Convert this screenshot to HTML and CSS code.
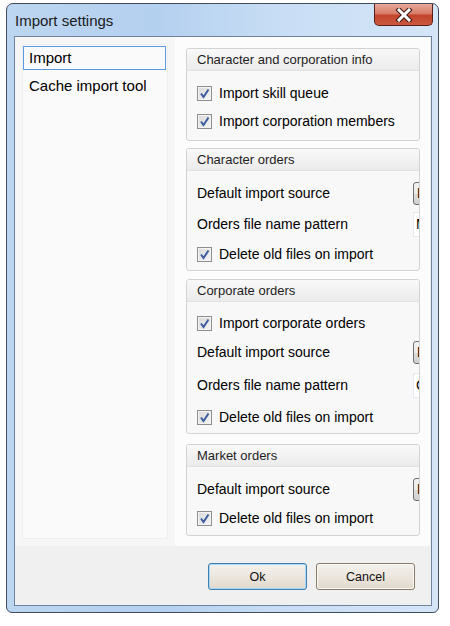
FILE: index.html
```html
<!DOCTYPE html>
<html lang="en">
<head>
    <meta charset="UTF-8">
    <title>Import settings</title>
    <link rel="stylesheet" href="styles.css">
</head>
<body>
    <div class="window">
        <div class="titlebar">
            <span class="title">Import settings</span>
            <button class="close" title="Close">
                <svg width="18" height="14" viewBox="0 0 18 14">
                    <path d="M4 2 L14 12 M14 2 L4 12" stroke="#3b1a14" stroke-width="5" stroke-linecap="square"/>
                    <path d="M4 2 L14 12 M14 2 L4 12" stroke="#ffffff" stroke-width="3" stroke-linecap="square"/>
                </svg>
            </button>
        </div>
        <div class="client">
            <div class="content">
                <div class="sidebar">
                    <ul class="pages">
                        <li class="selected">Import</li>
                        <li>Cache import tool</li>
                    </ul>
                </div>
                <div class="settings">
                    <div class="group">
                        <div class="group-title">Character and corporation info</div>
                        <div class="group-body">
                            <label class="check-row"><span class="check"><svg width="11" height="11" viewBox="0 0 11 11"><path d="M2 5.5 L4.5 9 L9.5 1.5" stroke="#3d5c9e" stroke-width="2" fill="none"/></svg></span>Import skill queue</label>
                            <label class="check-row"><span class="check"><svg width="11" height="11" viewBox="0 0 11 11"><path d="M2 5.5 L4.5 9 L9.5 1.5" stroke="#3d5c9e" stroke-width="2" fill="none"/></svg></span>Import corporation members</label>
                        </div>
                    </div>
                    <div class="group">
                        <div class="group-title">Character orders</div>
                        <div class="group-body">
                            <div class="field-row combo-row">
                                <span class="field-label">Default import source</span>
                                <span class="combo">EVE</span>
                            </div>
                            <div class="field-row text-row">
                                <span class="field-label">Orders file name pattern</span>
                                <span class="text-input">My</span>
                            </div>
                            <label class="check-row"><span class="check"><svg width="11" height="11" viewBox="0 0 11 11"><path d="M2 5.5 L4.5 9 L9.5 1.5" stroke="#3d5c9e" stroke-width="2" fill="none"/></svg></span>Delete old files on import</label>
                        </div>
                    </div>
                    <div class="group">
                        <div class="group-title">Corporate orders</div>
                        <div class="group-body">
                            <label class="check-row"><span class="check"><svg width="11" height="11" viewBox="0 0 11 11"><path d="M2 5.5 L4.5 9 L9.5 1.5" stroke="#3d5c9e" stroke-width="2" fill="none"/></svg></span>Import corporate orders</label>
                            <div class="field-row combo-row">
                                <span class="field-label">Default import source</span>
                                <span class="combo">EVE</span>
                            </div>
                            <div class="field-row text-row">
                                <span class="field-label">Orders file name pattern</span>
                                <span class="text-input">Corp</span>
                            </div>
                            <label class="check-row"><span class="check"><svg width="11" height="11" viewBox="0 0 11 11"><path d="M2 5.5 L4.5 9 L9.5 1.5" stroke="#3d5c9e" stroke-width="2" fill="none"/></svg></span>Delete old files on import</label>
                        </div>
                    </div>
                    <div class="group">
                        <div class="group-title">Market orders</div>
                        <div class="group-body">
                            <div class="field-row combo-row">
                                <span class="field-label">Default import source</span>
                                <span class="combo">File</span>
                            </div>
                            <label class="check-row"><span class="check"><svg width="11" height="11" viewBox="0 0 11 11"><path d="M2 5.5 L4.5 9 L9.5 1.5" stroke="#3d5c9e" stroke-width="2" fill="none"/></svg></span>Delete old files on import</label>
                        </div>
                    </div>
                </div>
            </div>
            <div class="footer">
                <button class="btn btn-default">Ok</button>
                <button class="btn">Cancel</button>
            </div>
        </div>
    </div>
</body>
</html>
```

FILE: styles.css
```css
body {
    margin: 0;
    background-color: #ffffff;
    font-family: "Liberation Sans", Arial, sans-serif;
    color: #000;
}
.window {
    box-sizing: border-box;
    width: 433px;
    height: 610px;
    margin: 3px 0 0 6px;
    padding: 0 6px 6px 7px;
    border: 1px solid #414c5c;
    border-radius: 7px 7px 6px 6px;
    background: linear-gradient(90deg, #bcd6f1 0%, #b4d0ef 35%, #c9def5 65%, #d4e5f7 100%);
    display: flex;
    flex-direction: column;
}
.titlebar {
    height: 32px;
    display: flex;
    justify-content: space-between;
    align-items: flex-start;
    flex-shrink: 0;
}
.title {
    font-size: 15px;
    color: #1b1b1b;
    margin: 8px 0 0 1px;
}
.close {
    width: 59px;
    height: 22px;
    margin: 0 -1px 0 0;
    padding: 0;
    border: 1px solid #5a2018;
    border-top: none;
    border-radius: 0 0 5px 5px;
    background: linear-gradient(#e9a899 0%, #d77d6b 45%, #c4432c 55%, #c85a40 100%);
    display: flex;
    align-items: center;
    justify-content: center;
}
.client {
    flex: 1;
    min-height: 0;
    border: 1px solid #6f849c;
    display: flex;
    flex-direction: column;
    background-color: #f0f0f0;
}
.content {
    height: 509px;
    display: flex;
    flex-shrink: 0;
}
.sidebar {
    width: 160px;
    flex-shrink: 0;
    box-sizing: border-box;
    padding: 7px;
    background-color: #f6f6f6;
}
.pages {
    list-style: none;
    margin: 0;
    padding: 1px 1px 0 0;
    height: 100%;
    box-sizing: border-box;
    background-color: #fafafa;
    border: 1px solid #efefef;
    border-radius: 2px;
    font-size: 15px;
}
.pages li {
    height: 24px;
    line-height: 22px;
    padding-left: 5px;
    margin-bottom: 4px;
    border: 1px solid transparent;
    box-sizing: border-box;
    white-space: nowrap;
}
.pages li.selected {
    border-color: #5b9be0;
}
.settings {
    width: 255px;
    min-width: 0;
    flex-shrink: 0;
    box-sizing: border-box;
    padding: 11px 10px 0 11px;
    background-color: #fcfcfc;
}
.group {
    border: 1px solid #d3d3d3;
    border-radius: 3px;
    background-color: #f8f8f8;
    overflow: hidden;
    margin-bottom: 8px;
}
.group:first-child {
    margin-bottom: 7px;
}
.group:nth-child(3) {
    margin-bottom: 10px;
}
.group-title {
    height: 21px;
    line-height: 21px;
    padding-left: 10px;
    font-size: 13px;
    color: #1e1e1e;
    background: linear-gradient(#f9f9f9, #ebebeb);
    border-bottom: 1px solid #e2e2e2;
}
.group-body {
    padding: 7px 0 3px 10px;
    font-size: 14px;
}
.group:first-child .group-body {
    padding: 8px 0 5px 10px;
}
.group:nth-child(2) .group-body {
    padding-bottom: 2px;
}
.group:nth-child(3) .group-body {
    padding-bottom: 2px;
}
.group:nth-child(3) .text-row {
    height: 36px;
}
.check-row {
    height: 28px;
    display: flex;
    align-items: center;
    white-space: nowrap;
}
.check {
    width: 13px;
    height: 13px;
    border: 1px solid #8f8f8f;
    background: linear-gradient(135deg, #d8d8d8, #f6f6f6);
    box-shadow: inset 0 0 0 1px #f4f4f4;
    margin-right: 7px;
    display: flex;
    align-items: center;
    justify-content: center;
    flex-shrink: 0;
}
.field-row {
    display: flex;
    align-items: center;
    white-space: nowrap;
}
.combo-row {
    height: 30px;
}
.text-row {
    height: 32px;
}
.field-label {
    width: 216px;
    flex-shrink: 0;
}
.combo {
    width: 150px;
    height: 23px;
    line-height: 21px;
    box-sizing: border-box;
    padding-left: 3px;
    border: 1px solid #707070;
    border-radius: 3px;
    background: linear-gradient(#f2f2f2 0%, #ebebeb 50%, #dddddd 51%, #cfcfcf 100%);
    flex-shrink: 0;
}
.text-input {
    width: 150px;
    height: 25px;
    line-height: 23px;
    box-sizing: border-box;
    padding-left: 2px;
    border: 1px solid #e3e9ef;
    background-color: #ffffff;
    flex-shrink: 0;
}
.footer {
    flex: 1;
    display: flex;
    justify-content: flex-end;
    align-items: flex-start;
    gap: 9px;
    padding: 17px 16px 0 0;
}
.btn {
    width: 99px;
    height: 27px;
    font-family: "Liberation Sans", Arial, sans-serif;
    font-size: 12.5px;
    color: #111;
    border: 1px solid #8c7b69;
    border-radius: 3px;
    background: linear-gradient(#f4f1ec 0%, #ece6de 50%, #e2d9cc 100%);
    box-shadow: inset 0 0 0 1px #faf8f5;
}
.btn-default {
    border-color: #3c7fb1;
    box-shadow: inset 0 0 0 1px #a8d8f5;
}
```
